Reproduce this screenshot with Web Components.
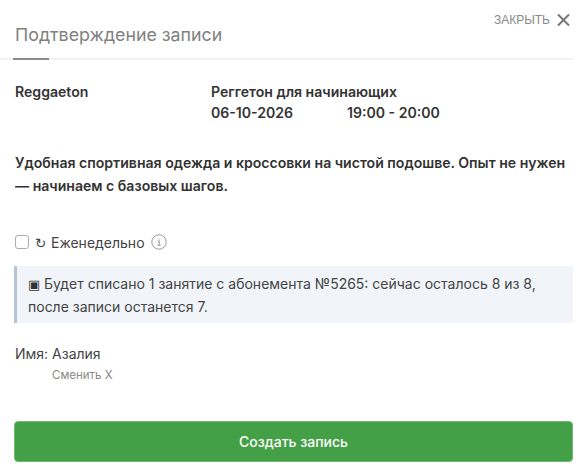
<!DOCTYPE html>
<html lang="ru">
<head>
<meta charset="utf-8">
<title>Подтверждение записи</title>
<style>
  html, body { margin: 0; background: #fff; }
  body { font-family: Inter, "Liberation Sans", sans-serif; color: #333; }
</style>
</head>
<body>
<booking-dialog></booking-dialog>
<script>
class DialogHeader extends HTMLElement {
  static template = `
    <style>
      :host { display: block; position: relative; padding: 24px 0 0 15px; height: 34px; border-bottom: 2px solid #f1f1f1; margin-right: 14px; }
      h1 { margin: 0; font-size: 17.8px; line-height: 22px; font-weight: 400; color: #808080; }
      h1::after { content: ""; position: absolute; left: 13px; bottom: -2px; width: 36px; height: 2px; background: #8a8a8a; }
      .close { position: absolute; top: 13px; right: 2px; display: flex; align-items: center; gap: 6px; font: 12px "Liberation Sans", sans-serif; color: #888; }
      svg { display: block; }
    </style>
    <h1><slot></slot></h1>
    <div class="close">ЗАКРЫТЬ
      <svg width="15" height="14" viewBox="0 0 15 14"><path d="M2 1.5l11 11M13 1.5L2 12.5" stroke="#777" stroke-width="2" fill="none"/></svg>
    </div>
  `;

  connectedCallback() {
    this.attachShadow({ mode: "open" }).innerHTML = DialogHeader.template;
  }
}

class ClassInfo extends HTMLElement {
  static template = `
    <style>
      :host { display: grid; grid-template-columns: 196px 1fr; padding: 21px 15px 0; font-size: 14.08px; font-weight: 600; line-height: 21px; color: #333; }
      .when { display: flex; line-height: 22px; }
      .date { width: 136px; }
    </style>
    <div>Reggaeton</div>
    <div>
      <div>Реггетон для начинающих</div>
      <div class="when"><span class="date">06-10-2026</span><span>19:00 - 20:00</span></div>
    </div>
  `;

  connectedCallback() {
    this.attachShadow({ mode: "open" }).innerHTML = ClassInfo.template;
  }
}

class WeeklyCheck extends HTMLElement {
  static template = `
    <style>
      :host { display: flex; align-items: center; padding-left: 15px; font-size: 14px; color: #444; height: 20px; }
      .box { width: 12px; height: 12px; border: 1px solid #aaa; border-radius: 3px; background: #fff; margin-right: 6px; }
      .sym { display: inline-block; width: 16px; font: 13.5px "DejaVu Sans", sans-serif; }
      svg { display: block; margin-left: 6px; }
    </style>
    <span class="box"></span>
    <span><span class="sym">↻</span>Еженедельно</span>
    <svg width="16" height="16" viewBox="0 0 16 16" fill="none" stroke="#999"><circle cx="8" cy="8" r="7.2"/><path d="M6.6 7h1.6v4M6.4 11.2h3.4M8 4.4v1.2" stroke-width="1.1"/></svg>
  `;

  connectedCallback() {
    this.attachShadow({ mode: "open" }).innerHTML = WeeklyCheck.template;
  }
}

class NoticeBox extends HTMLElement {
  static template = `
    <style>
      :host { display: block; margin: 0 14px; padding: 6px 10px 5px 11px; background: #f1f5f9; border-left: 3px solid #b4c4d0; font-size: 14px; line-height: 23px; color: #444; }
      .sym { display: inline-block; width: 16px; font: 13px "DejaVu Sans", sans-serif; color: #333; }
    </style>
    <div><span class="sym">▣</span><slot name="first"></slot></div>
    <div><slot></slot></div>
  `;

  connectedCallback() {
    this.attachShadow({ mode: "open" }).innerHTML = NoticeBox.template;
  }
}

class ClientName extends HTMLElement {
  static template = `
    <style>
      :host { display: block; padding-left: 15px; font-size: 14px; line-height: 20px; color: #444; }
      .change { padding: 2px 0 0 37px; font: 11.5px/18px Inter, sans-serif; color: #888; }
    </style>
    <div>Имя: Азалия</div>
    <div class="change">Сменить Х</div>
  `;

  connectedCallback() {
    this.attachShadow({ mode: "open" }).innerHTML = ClientName.template;
  }
}

class SubmitButton extends HTMLElement {
  static template = `
    <style>
      :host { display: flex; align-items: center; justify-content: center; margin: 0 14px; height: 39px; background: #43a047; border: 1px solid #6fba72; border-radius: 4px; color: #fff; font-size: 14px; font-weight: 500; }
    </style>
    <slot></slot>
  `;

  connectedCallback() {
    this.attachShadow({ mode: "open" }).innerHTML = SubmitButton.template;
  }
}

class BookingDialog extends HTMLElement {
  static template = `
    <style>
      :host { display: block; }
      .rules { margin: 0; padding: 27px 15px 0; font-size: 14.08px; font-weight: 600; line-height: 23px; color: #333; }
      weekly-check { margin-top: 35px; }
      notice-box { margin-top: 14px; }
      client-name { margin-top: 21px; }
      submit-button { margin-top: 37px; }
    </style>
    <dialog-header>Подтверждение записи</dialog-header>
    <class-info></class-info>
    <p class="rules">Удобная спортивная одежда и кроссовки на чистой подошве. Опыт не нужен — начинаем с базовых шагов.</p>
    <weekly-check></weekly-check>
    <notice-box><span slot="first">Будет списано 1 занятие с абонемента №5265: сейчас осталось 8 из 8,</span>после записи останется 7.</notice-box>
    <client-name></client-name>
    <submit-button>Создать запись</submit-button>
  `;

  connectedCallback() {
    this.attachShadow({ mode: "open" }).innerHTML = BookingDialog.template;
  }
}

customElements.define("dialog-header", DialogHeader);
customElements.define("class-info", ClassInfo);
customElements.define("weekly-check", WeeklyCheck);
customElements.define("notice-box", NoticeBox);
customElements.define("client-name", ClientName);
customElements.define("submit-button", SubmitButton);
customElements.define("booking-dialog", BookingDialog);
</script>
</body>
</html>
